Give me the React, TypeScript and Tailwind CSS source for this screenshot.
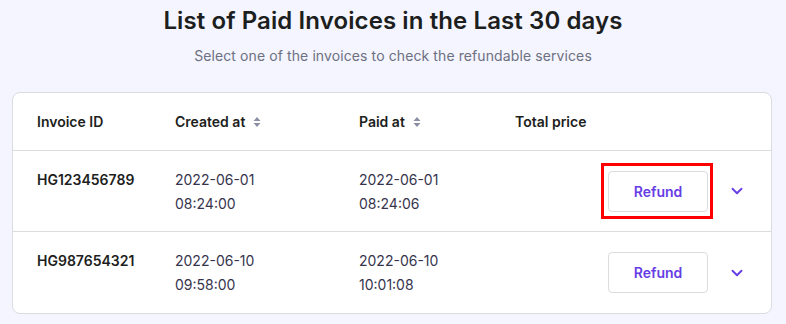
import { ChevronDown } from "lucide-react";

type Invoice = {
    id: string;
    createdDate: string;
    createdTime: string;
    paidDate: string;
    paidTime: string;
    highlighted?: boolean;
};

const invoices: Invoice[] = [
    { id: "HG123456789", createdDate: "2022-06-01", createdTime: "08:24:00", paidDate: "2022-06-01", paidTime: "08:24:06", highlighted: true },
    { id: "HG987654321", createdDate: "2022-06-10", createdTime: "09:58:00", paidDate: "2022-06-10", paidTime: "10:01:08" },
];

function SortIcon() {
    return (
        <svg width="8" height="12" viewBox="0 0 8 12" className="ml-[8px] text-[#8c8fa3]" fill="currentColor">
            <path d="M4 1 L7.5 5 L0.5 5 Z" />
            <path d="M4 11 L7.5 7 L0.5 7 Z" />
        </svg>
    );
}

export default function App() {
    return (
        <div className="min-h-[324px] w-[786px] bg-[#f4f5ff] font-['Inter',sans-serif] text-[#1d1e20]">
            <div className="pt-[5px] text-center">
                <h1 className="text-[24px] leading-[32px] font-semibold tracking-[0.1px]">List of Paid Invoices in the Last 30 days</h1>
                <p className="mt-[9px] text-[14px] leading-[20px] tracking-[0.1px] text-[#6d7081]">Select one of the invoices to check the refundable services</p>
            </div>

            <div className="mx-[12px] mt-[26px] w-[760px] rounded-[8px] border border-[#dadce0] bg-white">
                <div className="flex h-[58px] items-center border-b border-[#dadce0] pl-[24px] text-[14px] font-semibold">
                    <div className="w-[138px]">Invoice ID</div>
                    <div className="flex w-[184px] items-center">Created at<SortIcon /></div>
                    <div className="flex w-[156px] items-center">Paid at<SortIcon /></div>
                    <div>Total price</div>
                </div>

                {invoices.map((inv, i) => (
                    <div
                        key={inv.id}
                        className={`flex h-[81px] pl-[24px] ${i < invoices.length - 1 ? "border-b border-[#dadce0]" : ""}`}
                    >
                        <div className="w-[138px] pt-[17px] text-[14px] leading-[24px] font-semibold">{inv.id}</div>
                        <div className="w-[184px] pt-[17px] text-[14px] leading-[24px] text-[#36344d]">
                            <div>{inv.createdDate}</div>
                            <div>{inv.createdTime}</div>
                        </div>
                        <div className="w-[156px] pt-[17px] text-[14px] leading-[24px] text-[#36344d]">
                            <div>{inv.paidDate}</div>
                            <div>{inv.paidTime}</div>
                        </div>
                        <div className="flex flex-1 items-center justify-end pr-[25px]">
                            <div className="relative">
                                <button className="h-[41px] w-[100px] rounded-[4px] border border-[#dadce0] bg-white text-[14px] font-semibold text-[#673de6]">
                                    Refund
                                </button>
                                {inv.highlighted && (
                                    <div className="pointer-events-none absolute -top-[8px] -bottom-[7px] -left-[7px] -right-[5px] border-[3px] border-[#ff0000]" />
                                )}
                            </div>
                            <ChevronDown className="ml-[20px] text-[#673de6]" size={18} strokeWidth={2.5} />
                        </div>
                    </div>
                ))}
            </div>
        </div>
    );
}
